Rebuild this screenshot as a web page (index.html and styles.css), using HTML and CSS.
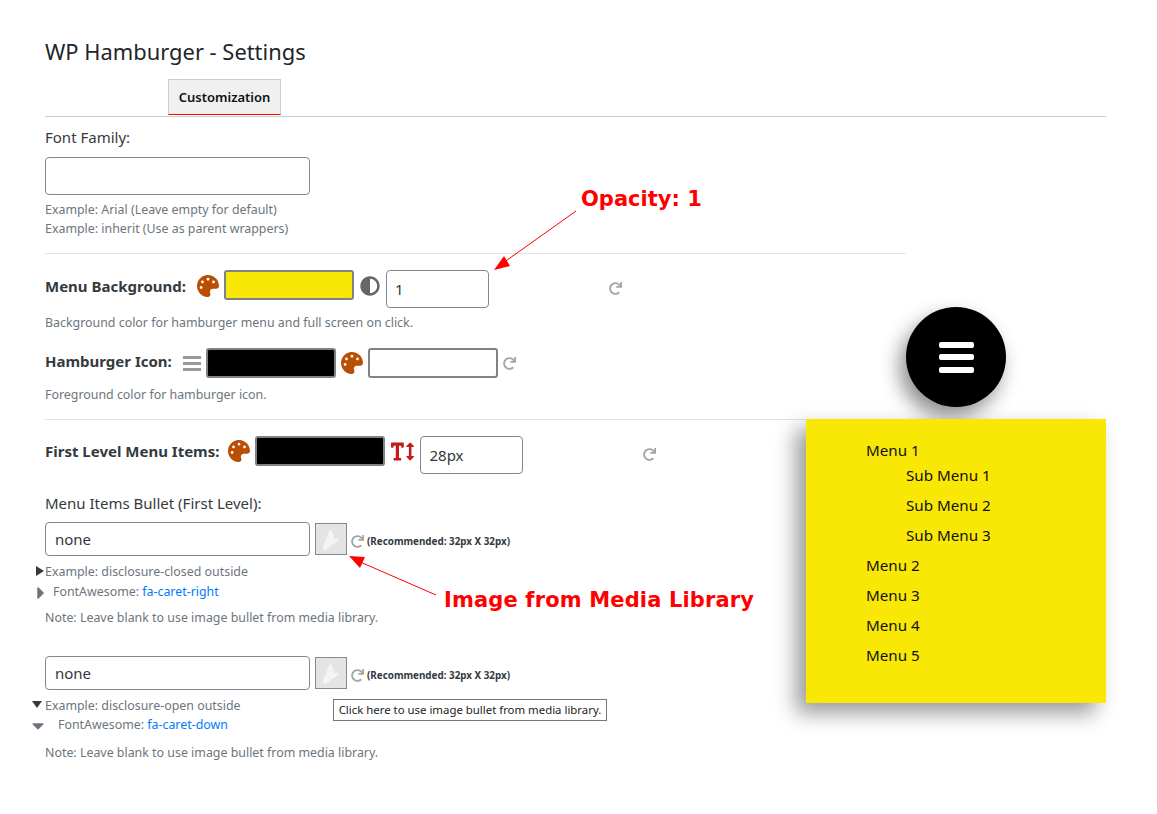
FILE: index.html
```html
<!DOCTYPE html>
<html lang="en">
<head>
    <meta charset="UTF-8">
    <meta name="viewport" content="width=device-width, initial-scale=1.0">
    <title>WP Hamburger - Settings</title>
    <link rel="stylesheet" href="styles.css">
</head>
<body>
    <!-- icon definitions -->
    <svg class="defs" aria-hidden="true">
        <symbol id="i-palette" viewBox="0 0 512 512"><path d="M204.3 5C104.9 24.4 24.8 104.3 5.2 203.4c-37 187 131.7 326.4 258.8 306.7 41.2-6.4 61.4-54.6 42.5-91.7-23.1-45.4 9.9-98.4 60.9-98.4h79.7c35.8 0 64.8-29.6 64.9-65.3C511.5 97.1 368.1-26.9 204.3 5zM96 320c-17.7 0-32-14.3-32-32s14.3-32 32-32 32 14.3 32 32-14.3 32-32 32zm32-128c-17.7 0-32-14.3-32-32s14.3-32 32-32 32 14.3 32 32-14.3 32-32 32zm128-64c-17.7 0-32-14.3-32-32s14.3-32 32-32 32 14.3 32 32-14.3 32-32 32zm128 64c-17.7 0-32-14.3-32-32s14.3-32 32-32 32 14.3 32 32-14.3 32-32 32z"/></symbol>
        <symbol id="i-adjust" viewBox="0 0 512 512"><path d="M8 256c0 136.966 111.033 248 248 248s248-111.034 248-248S392.966 8 256 8 8 119.033 8 256zm248 184V72c101.705 0 184 82.311 184 184 0 101.705-82.311 184-184 184z"/></symbol>
        <symbol id="i-redo" viewBox="0 0 512 512"><path d="M500.33 0h-47.41a12 12 0 0 0-12 12.57l4 82.76A247.42 247.42 0 0 0 256 8C119.34 8 7.9 119.53 8 256.19 8.1 393.07 119.1 504 256 504a247.1 247.1 0 0 0 166.18-63.91 12 12 0 0 0 .48-17.43l-34-34a12 12 0 0 0-16.38-.55A176 176 0 1 1 402.1 157.8l-101.53-4.87a12 12 0 0 0-12.57 12v47.41a12 12 0 0 0 12 12h200.33a12 12 0 0 0 12-12V12a12 12 0 0 0-12-12z"/></symbol>
        <symbol id="i-text-height" viewBox="0 0 576 512"><path d="M304 32H16A16 16 0 0 0 0 48v96a16 16 0 0 0 16 16h32a16 16 0 0 0 16-16v-32h56v304H80a16 16 0 0 0-16 16v32a16 16 0 0 0 16 16h160a16 16 0 0 0 16-16v-32a16 16 0 0 0-16-16h-40V112h56v32a16 16 0 0 0 16 16h32a16 16 0 0 0 16-16V48a16 16 0 0 0-16-16zm256 336h-48V144h48c14.31 0 21.33-17.31 11.31-27.31l-80-80a16 16 0 0 0-22.62 0l-80 80C379.36 126 384.36 144 400 144h48v224h-48c-14.29 0-21.31 17.31-11.31 27.31l80 80a16 16 0 0 0 22.62 0l80-80C580.64 386 575.64 368 560 368z"/></symbol>
        <symbol id="i-butterfly" viewBox="0 0 32 32"><path d="M15 5C18 8 19 12 19 16L25 16C23 19 20 21 17 22C15 25 12 27 8 28C7 24 8 21 10 18C12 14 13 9 15 5Z"/></symbol>
    </svg>

    <div class="container">
        <h1>WP Hamburger - Settings</h1>

        <div class="tabs">
            <a class="tab" href="#">Customization</a>
        </div>

        <section class="section section-first">
            <label class="label">Font Family:</label>
            <input class="field field-wide" type="text">
            <p class="help help-top">Example: Arial (Leave empty for default)<br>Example: inherit (Use as parent wrappers)</p>
        </section>

        <hr class="rule rule-short">

        <!-- Menu background -->
        <div class="row row-bg">
            <strong class="row-title">Menu Background:</strong>
            <svg class="icon icon-palette"><use href="#i-palette"/></svg>
            <span class="swatch swatch-yellow"></span>
            <svg class="icon icon-adjust"><use href="#i-adjust"/></svg>
            <input class="field field-small" type="text" value="1">
            <svg class="icon icon-redo redo-far"><use href="#i-redo"/></svg>
        </div>
        <p class="help help-row">Background color for hamburger menu and full screen on click.</p>

        <!-- Hamburger icon -->
        <div class="row row-icon">
            <strong class="row-title">Hamburger Icon:</strong>
            <span class="bars"><i></i><i></i><i></i></span>
            <span class="swatch swatch-black"></span>
            <svg class="icon icon-palette"><use href="#i-palette"/></svg>
            <span class="swatch swatch-white"></span>
            <svg class="icon icon-redo"><use href="#i-redo"/></svg>
        </div>
        <p class="help help-row">Foreground color for hamburger icon.</p>

        <hr class="rule rule-full">

        <!-- First level items -->
        <div class="row row-first">
            <strong class="row-title">First Level Menu Items:</strong>
            <svg class="icon icon-palette"><use href="#i-palette"/></svg>
            <span class="swatch swatch-black"></span>
            <svg class="icon icon-size"><use href="#i-text-height"/></svg>
            <input class="field field-small" type="text" value="28px">
            <svg class="icon icon-redo redo-far"><use href="#i-redo"/></svg>
        </div>

        <label class="label label-bullet">Menu Items Bullet (First Level):</label>

        <div class="bullet-row">
            <input class="field field-wide" type="text" value="none">
            <span class="media-btn"><svg class="icon-butterfly"><use href="#i-butterfly"/></svg></span>
            <svg class="icon icon-redo redo-bullet"><use href="#i-redo"/></svg>
            <b class="recommended">(Recommended: 32px X 32px)</b>
        </div>
        <p class="help example closed">Example: disclosure-closed outside</p>
        <p class="help fa-line"><svg class="caret caret-right" viewBox="0 0 192 512"><path d="M0 384.662V127.338c0-17.818 21.543-26.741 34.142-14.142l128.662 128.662c7.81 7.81 7.81 20.474 0 28.284L34.142 398.804C21.543 411.404 0 402.48 0 384.662z"/></svg>FontAwesome: <a href="#">fa-caret-right</a></p>
        <p class="help note">Note: Leave blank to use image bullet from media library.</p>

        <div class="bullet-row bullet-row-2">
            <input class="field field-wide" type="text" value="none">
            <span class="media-btn"><svg class="icon-butterfly"><use href="#i-butterfly"/></svg></span>
            <svg class="icon icon-redo redo-bullet"><use href="#i-redo"/></svg>
            <b class="recommended">(Recommended: 32px X 32px)</b>
        </div>
        <p class="help example open">Example: disclosure-open outside</p>
        <p class="help fa-line"><svg class="caret caret-down" viewBox="0 0 320 512"><path d="M31.3 192h257.3c17.8 0 26.7 21.5 14.1 34.1L174.1 354.8c-7.8 7.8-20.5 7.8-28.3 0L17.2 226.1C4.6 213.5 13.5 192 31.3 192z"/></svg>FontAwesome: <a href="#">fa-caret-down</a></p>
        <p class="help note note-last">Note: Leave blank to use image bullet from media library.</p>
    </div>

    <!-- things lying over the page -->
    <div class="tooltip">Click here to use image bullet from media library.</div>

    <div class="annotation note-opacity">Opacity: 1</div>
    <div class="annotation note-media">Image from Media Library</div>
    <svg class="arrows" width="1157" height="814">
        <line x1="576" y1="211" x2="503" y2="263"/>
        <polygon points="494,270 504,256 510,266"/>
        <line x1="436" y1="595" x2="358" y2="561"/>
        <polygon points="349,556 365,557 360,568"/>
    </svg>

    <div class="burger"><i></i><i></i><i></i></div>
    <nav class="preview">
        <ul class="menu">
            <li>Menu 1
                <ul class="submenu">
                    <li>Sub Menu 1</li>
                    <li>Sub Menu 2</li>
                    <li>Sub Menu 3</li>
                </ul>
            </li>
            <li>Menu 2</li>
            <li>Menu 3</li>
            <li>Menu 4</li>
            <li>Menu 5</li>
        </ul>
    </nav>
</body>
</html>
```

FILE: styles.css
```css
* {
    box-sizing: border-box;
}
body {
    margin: 0;
    background-color: #fff;
    color: #212529;
    font-family: "Noto Sans", sans-serif;
    font-size: 15px;
}
.defs {
    display: none;
}
.container {
    width: 1061px;
    height: 814px;
    margin-left: 45px;
}
h1 {
    margin: 0;
    padding-top: 37px;
    font-size: 21.9px;
    font-weight: 400;
    line-height: 29px;
}
.tabs {
    height: 38px;
    margin-top: 13px;
    padding-left: 123px;
    border-bottom: 1px solid #ccc;
}
.tab {
    display: block;
    width: 113px;
    height: 36px;
    background: #f0f0f0;
    border: 1px solid #ccc;
    border-bottom: 1px solid #f00;
    color: #111;
    font-size: 13px;
    font-weight: 600;
    line-height: 34px;
    text-align: center;
    text-decoration: none;
}
.label {
    display: block;
    color: #343a40;
    line-height: 20px;
}
.section-first {
    padding-top: 10px;
}
.field {
    display: block;
    flex: none;
    height: 38px;
    padding: 0 9px;
    border: 1px solid #7e8993;
    border-radius: 4px;
    background: #fff;
    color: #32373c;
    font-family: inherit;
    font-size: 15px;
}
.field-wide {
    width: 265px;
}
.field-small {
    width: 103px;
    padding: 0 8px;
}
.section-first .field {
    margin-top: 10px;
}
.help {
    margin: 0;
    color: #6c757d;
    font-size: 12.4px;
    line-height: 19px;
}
.help-top {
    margin-top: 5px;
}
.rule {
    margin: 0;
    border: 0;
    border-top: 1px solid #e4e4e4;
}
.rule-short {
    width: 861px;
    margin-top: 15px;
}
.rule-full {
    margin-top: 15px;
}

/* setting rows */
.row {
    display: flex;
    align-items: center;
    height: 38px;
    margin-top: 16px;
}
.row-icon {
    height: 30px;
}
.row-title {
    margin-bottom: 6px;
    color: #343a40;
    font-size: 15px;
    font-weight: 700;
}
.row-icon .row-title {
    margin-bottom: 5px;
}
.row-first .row-title {
    margin-bottom: 8px;
}
.help-row {
    margin-top: 5px;
}
.row-icon + .help-row {
    margin-top: 7px;
}
.icon {
    flex: none;
    width: 22px;
    height: 22px;
    margin-bottom: 6px;
}
.row-icon .icon {
    margin-bottom: 0;
}
.row-first .icon-palette,
.row-first .icon-size {
    margin-bottom: 8px;
}
.icon-palette {
    fill: #b94f02;
}
.icon-adjust {
    width: 20px;
    height: 20px;
    fill: #666;
}
.icon-size {
    width: 23px;
    height: 21px;
    fill: #c81919;
}
.icon-redo {
    width: 13px;
    height: 13px;
    margin-bottom: 1px;
    fill: #a5a5a5;
}
.swatch {
    display: block;
    flex: none;
    width: 130px;
    height: 30px;
    margin-bottom: 8px;
    border: 2px solid #7e8288;
    border-radius: 3px;
}
.row-icon .swatch {
    margin-bottom: 0;
}
.swatch-yellow {
    background: #f9e806;
}
.swatch-black {
    background: #000;
}
.swatch-white {
    background: #fff;
}
.row .icon-palette {
    margin-left: 9px;
}
.row-bg .icon-palette {
    margin-left: 11px;
}
.row .swatch {
    margin-left: 5px;
}
.row .icon-adjust {
    margin-left: 6px;
}
.row .field {
    margin-left: 6px;
}
.row .icon-size {
    margin-left: 6px;
}
.row-icon .icon-palette {
    margin-left: 5px;
}
.row-icon .icon-redo {
    margin-left: 5px;
}
.row .redo-far {
    margin-left: 120px;
}
.bars {
    display: flex;
    flex: none;
    flex-direction: column;
    gap: 3px;
    width: 18px;
    margin-left: 11px;
}
.bars i {
    display: block;
    height: 3px;
    background: #999;
}

/* bullet fields */
.label-bullet {
    margin-top: 19px;
}
.bullet-row {
    display: flex;
    align-items: center;
    margin-top: 9px;
}
.bullet-row-2 {
    margin-top: 29px;
}
.bullet-row .field {
    height: 34px;
}
.media-btn {
    display: block;
    flex: none;
    width: 32px;
    height: 32px;
    margin-left: 5px;
    border: 1px solid #888;
    background: #e4e4e4;
}
.icon-butterfly {
    display: block;
    width: 30px;
    height: 30px;
    fill: #f4f4f4;
}
.redo-bullet {
    margin: 4px 0 0 4px;
}
.recommended {
    margin: 4px 0 0 3px;
    color: #343a40;
    font-size: 9.85px;
}
.example {
    margin-top: 6px;
}
.example::before {
    content: "";
    display: inline-block;
}
.example.closed::before {
    margin-left: -9px;
    margin-right: 1px;
    border-top: 5px solid transparent;
    border-bottom: 5px solid transparent;
    border-left: 8px solid #343a40;
}
.example.open::before {
    margin-left: -13px;
    margin-right: 3px;
    vertical-align: 2px;
    border-top: 7px solid #343a40;
    border-left: 5px solid transparent;
    border-right: 5px solid transparent;
}
.closed + .fa-line {
    margin-top: 1px;
}
.fa-line a {
    color: #007bff;
    text-decoration: none;
}
.caret {
    fill: #6c757d;
}
.caret-right {
    width: 8px;
    height: 20px;
    margin: -3px 8px -3px -8px;
    vertical-align: middle;
}
.caret-down {
    width: 12px;
    height: 19px;
    margin: -3px 14px -3px -13px;
    vertical-align: middle;
}
.note {
    margin-top: 7px;
}
.note-last {
    margin-top: 9px;
}

/* overlays */
.tooltip {
    position: absolute;
    left: 333px;
    top: 699px;
    width: 274px;
    height: 22px;
    border: 1px solid #777;
    background: #fff;
    color: #222;
    font-size: 11.4px;
    line-height: 20px;
    text-align: center;
    white-space: nowrap;
}
.annotation {
    position: absolute;
    color: #f00;
    font-family: "DejaVu Sans", sans-serif;
    font-size: 21px;
    font-weight: 700;
    line-height: 30px;
}
.note-opacity {
    left: 581px;
    top: 184px;
}
.note-media {
    left: 444px;
    top: 585px;
    letter-spacing: 0.15px;
}
.arrows {
    position: absolute;
    left: 0;
    top: 0;
    pointer-events: none;
}
.arrows line {
    stroke: #f00;
    stroke-width: 1;
}
.arrows polygon {
    fill: #f00;
}
.burger {
    position: absolute;
    left: 906px;
    top: 307px;
    display: flex;
    flex-direction: column;
    align-items: center;
    justify-content: center;
    gap: 6.5px;
    width: 100px;
    height: 100px;
    border-radius: 50%;
    background: #000;
    box-shadow: -6px 10px 20px rgba(0, 0, 0, 0.45);
}
.burger i {
    display: block;
    width: 35px;
    height: 6px;
    border-radius: 2px;
    background: #fff;
}
.preview {
    position: absolute;
    left: 806px;
    top: 419px;
    width: 300px;
    height: 284px;
    padding: 16px 0 0 60px;
    background: #f9e806;
    box-shadow: -10px 10px 20px rgba(0, 0, 0, 0.4);
    color: #111;
    font-size: 15.2px;
}
.menu,
.submenu {
    margin: 0;
    padding: 0;
    list-style: none;
}
.menu > li {
    line-height: 30px;
}
.submenu {
    margin-top: -5px;
    padding-left: 40px;
}
```
